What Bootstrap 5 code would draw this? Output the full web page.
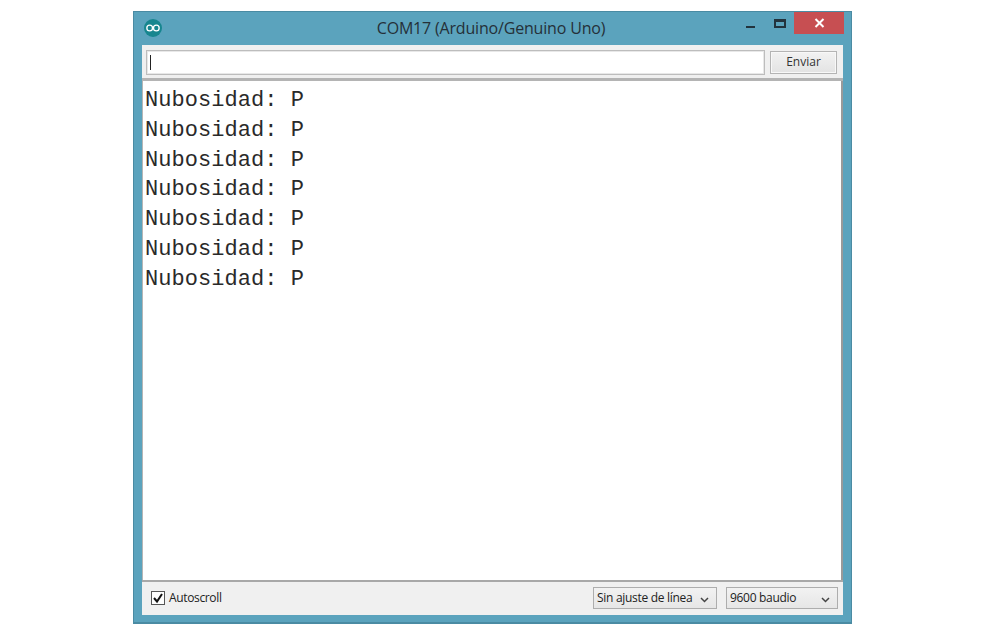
<!DOCTYPE html>
<html lang="es"><head><meta charset="utf-8"><title>COM17</title>
<link href="https://cdn.jsdelivr.net/npm/bootstrap@5.3.0/dist/css/bootstrap.min.css" rel="stylesheet">
<style>
html,body{height:636px;overflow:hidden;background:#fff}
.serial-win{width:719px;height:613px;margin:11px 0 0 133px;background:#5ba3bd;border:1px solid #4a8ba3;border-width:1px 1px 2px 1px;padding:0 8px 7px 8px;font-family:"Liberation Sans",Arial,sans-serif;color:#222}
.title-bar{height:33px;position:relative;color:#253038}
.app-logo{width:18px;height:18px;margin:7px 0 0 2px}
.title-text{position:absolute;left:0;right:0;top:6px;text-align:center;font-size:16px;line-height:20px;font-family:"Open Sans","Liberation Sans",sans-serif;letter-spacing:-.18px;padding-right:3px}
.win-ctl{position:absolute;right:-1px;top:0}
.ctl-min{width:9px;height:2px;background:#22333d;margin:14px 19px 0 0}
.ctl-max{width:12px;height:9px;border:2px solid #22333d;border-top-width:3px;margin:7px 8px 0 0}
.ctl-close{width:50px;height:22px;background:#c74f52;color:#fff}
.send-row{background:#f0f0f0;height:36px;padding:5px 6px 0 4px;border-bottom:3px solid #b4b4b4;gap:5px}
.send-input{flex:1;height:25px;background:#fff;border:1px solid #bdbdbd;box-shadow:inset 0 0 0 1px #e8e8e8;position:relative}
.caret-bar{position:absolute;left:3px;top:4px;width:1px;height:15px;background:#222}
.send-btn{width:67px;height:23px;margin-top:1px;background:linear-gradient(#f2f2f2,#e3e3e3);border:1px solid #b4b4b4;box-shadow:inset 0 0 0 1px #f8f8f8;font-size:12px;line-height:19px;text-align:center;color:#333;font-family:"Open Sans","Liberation Sans",sans-serif}
.log-area{height:499px;background:#fff;border-right:2px solid #9a9a9a;border-left:1px solid #b5b5b5;padding:5px 0 0 2px;font-family:"Liberation Mono","Courier New",monospace;font-size:22px;line-height:29.8px;letter-spacing:.04px;color:#2a2a2a;overflow:hidden}
.foot-row{background:#f0f0f0;height:35px;border-top:2px solid #a8a8a8;padding:5px 5px 0 9px;font-size:12px;font-family:"Open Sans","Liberation Sans",sans-serif;color:#222}
.check-box{width:14px;height:14px;border:1px solid #555;background:#fdfdfd;margin-top:4px;margin-right:4px}
.auto-label{line-height:22px;letter-spacing:-.35px}
.pick-box{height:22px;background:linear-gradient(#f2f2f2,#e6e6e6);border:1px solid #adadad;padding:0 7px 0 3px;line-height:19px;letter-spacing:-.3px}
.pick-a{width:124px;margin-right:9px}
.pick-b{width:112px}
.pick-box svg{margin-top:9px}
</style></head>
<body>
<div class="serial-win d-flex flex-column">
  <div class="title-bar">
    <svg class="app-logo d-block" viewBox="0 0 19 19"><circle cx="9.5" cy="9.5" r="9.5" fill="#17868f"/><circle cx="6" cy="9.5" r="3" fill="none" stroke="#fff" stroke-width="1.4"/><circle cx="13" cy="9.5" r="3" fill="none" stroke="#fff" stroke-width="1.4"/></svg>
    <div class="title-text">COM17 (Arduino/Genuino Uno)</div>
    <div class="win-ctl d-flex">
      <div class="ctl-min"></div><div class="ctl-max"></div>
      <div class="ctl-close d-flex align-items-center justify-content-center"><svg width="11" height="10" viewBox="0 0 11 10"><path d="M1.5 1l8 8M9.5 1l-8 8" stroke="#fff" stroke-width="2"/></svg></div>
    </div>
  </div>
  <div class="send-row d-flex">
    <div class="send-input"><div class="caret-bar"></div></div>
    <div class="send-btn">Enviar</div>
  </div>
  <div class="log-area">
    <div>Nubosidad: P</div><div>Nubosidad: P</div><div>Nubosidad: P</div><div>Nubosidad: P</div><div>Nubosidad: P</div><div>Nubosidad: P</div><div>Nubosidad: P</div>
  </div>
  <div class="foot-row d-flex">
    <div class="check-box d-flex align-items-center justify-content-center"><svg width="12" height="12" viewBox="0 0 12 12"><path d="M2 6l3 3.5L10 2" fill="none" stroke="#111" stroke-width="2"/></svg></div>
    <div class="auto-label flex-grow-1">Autoscroll</div>
    <div class="pick-box pick-a d-flex justify-content-between"><span>Sin ajuste de línea</span><svg width="9" height="6" viewBox="0 0 9 6"><path d="M1 1l3.5 3.5L8 1" fill="none" stroke="#444" stroke-width="1.5"/></svg></div>
    <div class="pick-box pick-b d-flex justify-content-between"><span>9600 baudio</span><svg width="9" height="6" viewBox="0 0 9 6"><path d="M1 1l3.5 3.5L8 1" fill="none" stroke="#444" stroke-width="1.5"/></svg></div>
  </div>
</div>
</body></html>
